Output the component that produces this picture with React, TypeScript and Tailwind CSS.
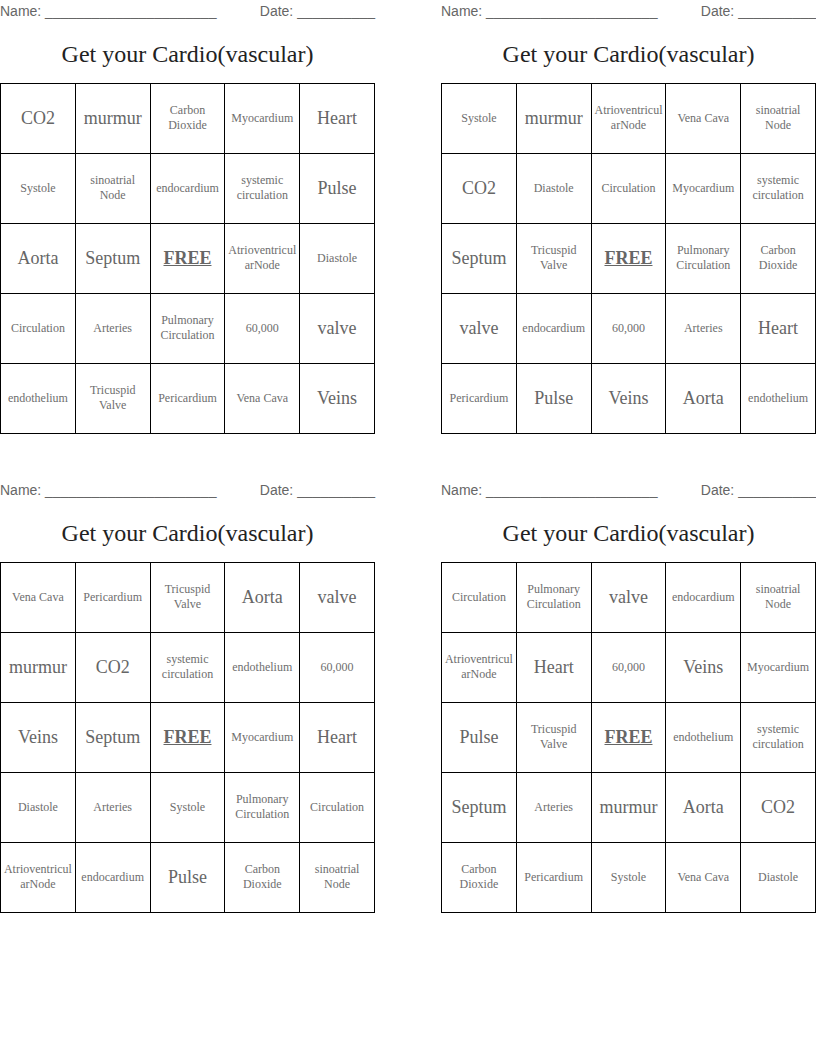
const BIG = new Set(["CO2", "murmur", "Heart", "Pulse", "Aorta", "Septum", "valve", "Veins", "FREE"]);

const cards: string[][] = [
  [
    "CO2", "murmur", "Carbon\nDioxide", "Myocardium", "Heart",
    "Systole", "sinoatrial\nNode", "endocardium", "systemic\ncirculation", "Pulse",
    "Aorta", "Septum", "FREE", "Atrioventricul\narNode", "Diastole",
    "Circulation", "Arteries", "Pulmonary\nCirculation", "60,000", "valve",
    "endothelium", "Tricuspid\nValve", "Pericardium", "Vena Cava", "Veins",
  ],
  [
    "Systole", "murmur", "Atrioventricul\narNode", "Vena Cava", "sinoatrial\nNode",
    "CO2", "Diastole", "Circulation", "Myocardium", "systemic\ncirculation",
    "Septum", "Tricuspid\nValve", "FREE", "Pulmonary\nCirculation", "Carbon\nDioxide",
    "valve", "endocardium", "60,000", "Arteries", "Heart",
    "Pericardium", "Pulse", "Veins", "Aorta", "endothelium",
  ],
  [
    "Vena Cava", "Pericardium", "Tricuspid\nValve", "Aorta", "valve",
    "murmur", "CO2", "systemic\ncirculation", "endothelium", "60,000",
    "Veins", "Septum", "FREE", "Myocardium", "Heart",
    "Diastole", "Arteries", "Systole", "Pulmonary\nCirculation", "Circulation",
    "Atrioventricul\narNode", "endocardium", "Pulse", "Carbon\nDioxide", "sinoatrial\nNode",
  ],
  [
    "Circulation", "Pulmonary\nCirculation", "valve", "endocardium", "sinoatrial\nNode",
    "Atrioventricul\narNode", "Heart", "60,000", "Veins", "Myocardium",
    "Pulse", "Tricuspid\nValve", "FREE", "endothelium", "systemic\ncirculation",
    "Septum", "Arteries", "murmur", "Aorta", "CO2",
    "Carbon\nDioxide", "Pericardium", "Systole", "Vena Cava", "Diastole",
  ],
];

function Cell({ word }: { word: string }) {
  let cls = "text-[12px] leading-[15px] text-[#6e6e6e]";
  if (word === "FREE") cls = "text-[18px] leading-[22px] font-bold underline text-[#666]";
  else if (BIG.has(word)) cls = "text-[18px] leading-[22px] text-[#666]";
  return (
    <div className="h-[70px] pb-[1px] border-r border-b border-black flex items-center justify-center text-center whitespace-pre-line">
      <span className={cls}>{word}</span>
    </div>
  );
}

function Card({ words }: { words: string[] }) {
  return (
    <div className="w-[375px] flex flex-col">
      <div className="h-[22px] flex items-center justify-between text-[14px] text-[#666] font-['Liberation_Sans',Arial,sans-serif]">
        <span>Name: ______________________</span>
        <span>Date: __________</span>
      </div>
      <div className="h-[61px] pt-[2px] flex items-center justify-center text-[24px] text-[#222]">
        Get your Cardio(vascular)
      </div>
      <div className="grid grid-cols-5 border-l border-t border-black">
        {words.map((w, i) => (
          <Cell key={i} word={w} />
        ))}
      </div>
    </div>
  );
}

export default function App() {
  return (
    <div className="w-[816px] h-[1056px] bg-white overflow-hidden font-['Liberation_Serif',Georgia,serif] flex flex-col gap-[45px]">
      <div className="flex gap-[66px]">
        <Card words={cards[0]} />
        <Card words={cards[1]} />
      </div>
      <div className="flex gap-[66px]">
        <Card words={cards[2]} />
        <Card words={cards[3]} />
      </div>
    </div>
  );
}
